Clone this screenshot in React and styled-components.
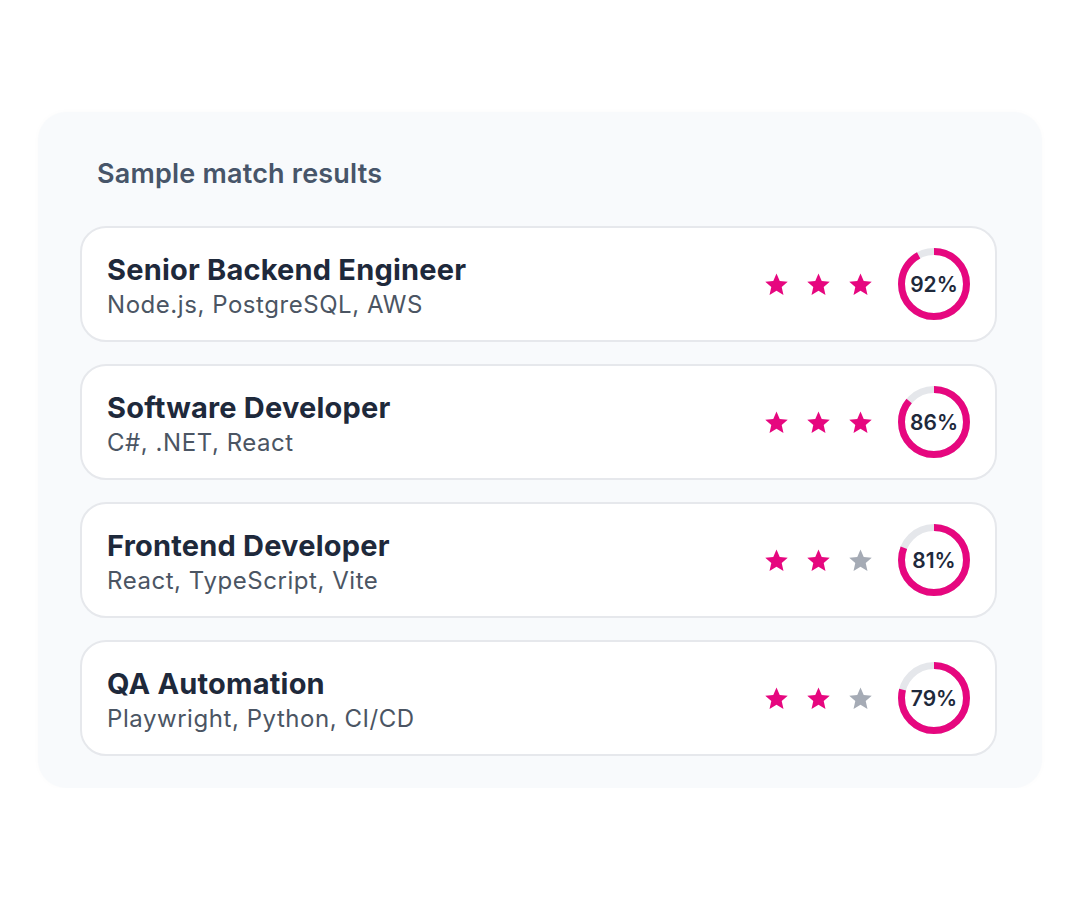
import React from "react";
import styled, { createGlobalStyle } from "styled-components";

const GlobalStyle = createGlobalStyle`
  html, body {
    margin: 0;
    padding: 0;
    background: #ffffff;
    font-family: Inter, "Noto Sans", "Liberation Sans", sans-serif;
  }
`;

const PINK = "#e6077f";

const Page = styled.div`
  padding: 112px 38px 0 38px;
`;

const Panel = styled.section`
  background: #f8fafc;
  border-radius: 28px;
  padding: 46px 45px 32px 42px;
  box-shadow: 0 0 6px rgba(15, 23, 42, 0.02);
`;

const Heading = styled.h2`
  margin: 0 0 36px 0;
  padding-left: 17px;
  font-size: 27px;
  line-height: 32px;
  font-weight: 600;
  letter-spacing: 0.2px;
  color: #475569;
`;

const List = styled.div`
  display: flex;
  flex-direction: column;
  gap: 22px;
`;

const Card = styled.div`
  height: 116px;
  box-sizing: border-box;
  background: #ffffff;
  border: 2px solid #e6e8ec;
  border-radius: 26px;
  padding: 0 25px 0 25px;
  display: flex;
  align-items: center;
  justify-content: space-between;
`;

const Info = styled.div`
  display: flex;
  flex-direction: column;
  gap: 3px;
  padding-top: 5px;
`;

const Title = styled.div`
  font-size: 29px;
  line-height: 34px;
  font-weight: 700;
  letter-spacing: 0.2px;
  color: #1e293b;
`;

const Skills = styled.div`
  font-size: 24px;
  line-height: 30px;
  font-weight: 400;
  letter-spacing: 0.55px;
  color: #4b5563;
`;

const Right = styled.div`
  display: flex;
  align-items: center;
  gap: 25px;
`;

const Stars = styled.div`
  display: flex;
  align-items: center;
  gap: 17px;
`;

const StarSvg = styled.svg`
  width: 25px;
  height: 25px;
  display: block;
  fill: ${(p) => (p.$on ? PINK : "#a5abb5")};
`;

const Ring = styled.div`
  position: relative;
  width: 72px;
  height: 72px;
  display: flex;
  align-items: center;
  justify-content: center;
`;

const RingSvg = styled.svg`
  position: absolute;
  inset: 0;
  width: 72px;
  height: 72px;
  transform: rotate(-90deg);
`;

const RingLabel = styled.span`
  position: relative;
  font-size: 21px;
  font-weight: 600;
  color: #1e293b;
  letter-spacing: 0px;
`;

const Star = ({ on }) => (
  <StarSvg $on={on} viewBox="0 0 24 24">
    <polygon points="12,1.5 15.1,8.6 22.8,9.3 17,14.4 18.7,22 12,18 5.3,22 7,14.4 1.2,9.3 8.9,8.6" />
  </StarSvg>
);

const Progress = ({ value }) => {
  const r = 32.5;
  const c = 2 * Math.PI * r;
  return (
    <Ring>
      <RingSvg viewBox="0 0 72 72">
        <circle cx="36" cy="36" r={r} fill="none" stroke="#e5e7eb" strokeWidth="7" />
        <circle
          cx="36"
          cy="36"
          r={r}
          fill="none"
          stroke={PINK}
          strokeWidth="7"
          strokeDasharray={`${(c * value) / 100} ${c}`}
        />
      </RingSvg>
      <RingLabel>{value}%</RingLabel>
    </Ring>
  );
};

const data = [
  { title: "Senior Backend Engineer", skills: "Node.js, PostgreSQL, AWS", stars: 3, score: 92 },
  { title: "Software Developer", skills: "C#, .NET, React", stars: 3, score: 86 },
  { title: "Frontend Developer", skills: "React, TypeScript, Vite", stars: 2, score: 81 },
  { title: "QA Automation", skills: "Playwright, Python, CI/CD", stars: 2, score: 79 },
];

export default function App() {
  return (
    <Page>
      <GlobalStyle />
      <Panel>
        <Heading>Sample match results</Heading>
        <List>
          {data.map((d) => (
            <Card key={d.title}>
              <Info>
                <Title>{d.title}</Title>
                <Skills>{d.skills}</Skills>
              </Info>
              <Right>
                <Stars>
                  {[0, 1, 2].map((i) => (
                    <Star key={i} on={i < d.stars} />
                  ))}
                </Stars>
                <Progress value={d.score} />
              </Right>
            </Card>
          ))}
        </List>
      </Panel>
    </Page>
  );
}
